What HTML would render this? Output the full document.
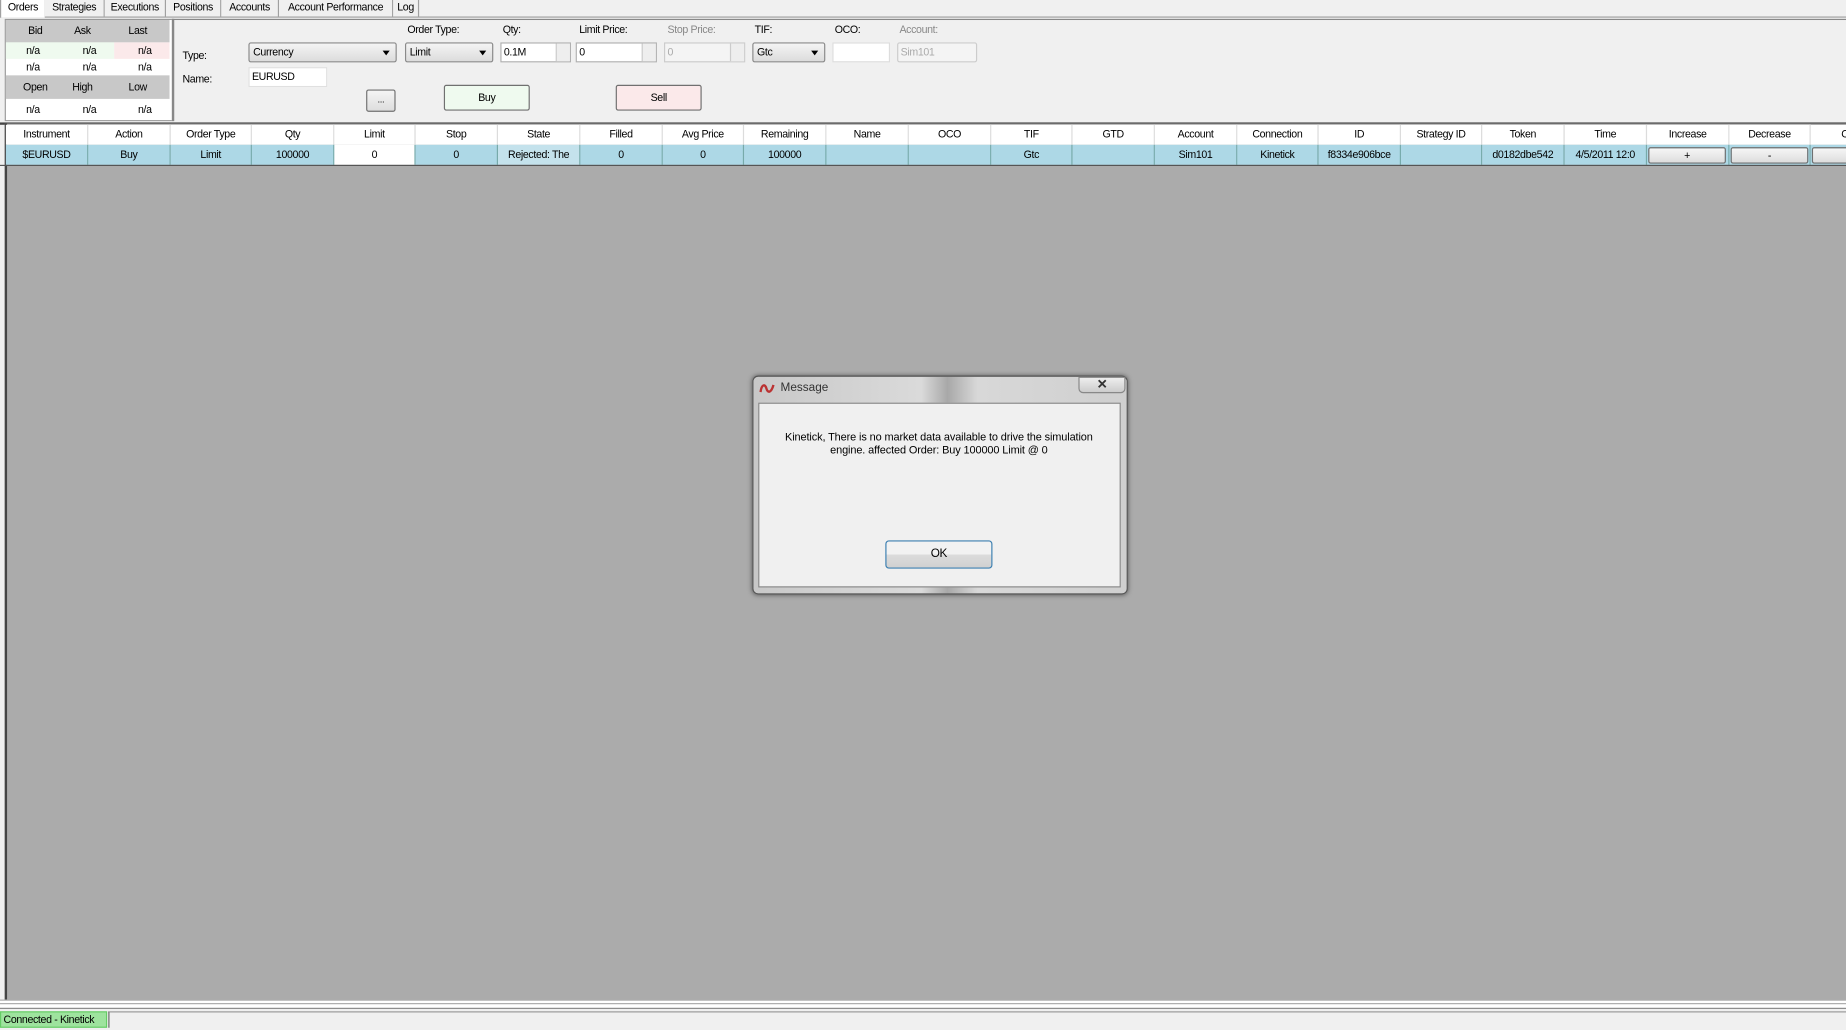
<!DOCTYPE html>
<html><head><meta charset="utf-8"><style>
html,body{margin:0;padding:0;width:1846px;height:1030px;overflow:hidden;background:#f0f0f0}
#root{position:absolute;left:0;top:0;width:1568px;height:875px;transform:scale(1.17730);transform-origin:0 0;font-family:"Liberation Sans",sans-serif;font-size:9px;letter-spacing:-0.3px;white-space:nowrap;color:#000;background:#f0f0f0}
.a{position:absolute;box-sizing:border-box}
.tab{position:absolute;top:0;height:14px;border-right:1px solid #a0a0a0;text-align:center;line-height:13px;background:#f0f0f0;overflow:hidden}
.c{position:absolute;text-align:center}
.cb{position:absolute;box-sizing:border-box;border:1px solid #8a8a8a;border-radius:2px;background:linear-gradient(#f4f4f4,#dcdcdc);height:17px;line-height:15px;padding-left:3px}
.cb:after{content:"";position:absolute;right:5px;top:6px;border-left:3px solid transparent;border-right:3px solid transparent;border-top:4px solid #000}
.tb{position:absolute;box-sizing:border-box;border:1px solid #b0b0b0;background:#fff;height:17px;line-height:15px;padding-left:2px}
.spin{position:absolute;right:0;top:0;width:11px;height:15px;border-left:1px solid #ccc;background:#eee}
.btn{position:absolute;box-sizing:border-box;border:1px solid #707070;border-radius:2px;text-align:center}
.hd{position:absolute;top:106px;height:17px;line-height:17px;text-align:center;border-right:1px solid #dcdcdc;background:#fff;overflow:hidden}
.cl{position:absolute;top:123px;height:17px;line-height:17px;text-align:center;border-right:1px solid #7aa;background:#add8e6;box-sizing:border-box;overflow:hidden}
</style></head><body><div id="root">
<div class="a" style="left:0;top:14px;width:1568px;height:1px;background:#a0a0a0"></div>
<div class="tab" style="left:0;width:37px;background:#fff;height:15px;border:1px solid #a0a0a0;border-bottom:none;top:-1px">Orders</div>
<div class="tab" style="left:38px;width:50px">Strategies</div>
<div class="tab" style="left:89px;width:51px">Executions</div>
<div class="tab" style="left:141px;width:46px">Positions</div>
<div class="tab" style="left:188px;width:48px">Accounts</div>
<div class="tab" style="left:237px;width:96px">Account Performance</div>
<div class="tab" style="left:334px;width:21px">Log</div>
<div class="a" style="left:4px;top:16px;width:143px;height:87px;border:1px solid #999;background:#fff"></div>
<div class="a" style="left:5px;top:17px;width:139px;height:19px;background:#c8c8c8"></div>
<div class="a" style="left:5px;top:36px;width:92px;height:14px;background:#effaef"></div>
<div class="a" style="left:97px;top:36px;width:47px;height:14px;background:#fbe9ea"></div>
<div class="a" style="left:5px;top:64px;width:139px;height:20px;background:#c8c8c8"></div>
<div class="c" style="left:10px;top:21px;width:40px">Bid</div><div class="c" style="left:50px;top:21px;width:40px">Ask</div><div class="c" style="left:97px;top:21px;width:40px">Last</div>
<div class="c" style="left:8px;top:38px;width:40px">n/a</div><div class="c" style="left:56px;top:38px;width:40px">n/a</div><div class="c" style="left:103px;top:38px;width:40px">n/a</div>
<div class="c" style="left:8px;top:52px;width:40px">n/a</div><div class="c" style="left:56px;top:52px;width:40px">n/a</div><div class="c" style="left:103px;top:52px;width:40px">n/a</div>
<div class="c" style="left:10px;top:69px;width:40px">Open</div><div class="c" style="left:50px;top:69px;width:40px">High</div><div class="c" style="left:97px;top:69px;width:40px">Low</div>
<div class="c" style="left:8px;top:88px;width:40px">n/a</div><div class="c" style="left:56px;top:88px;width:40px">n/a</div><div class="c" style="left:103px;top:88px;width:40px">n/a</div>
<div class="a" style="left:146px;top:16px;width:1422px;height:87px;border-left:2px solid #888;border-top:1px solid #888;background:#f0f0f0"></div>
<div class="a" style="left:155px;top:42px">Type:</div>
<div class="a" style="left:155px;top:62px">Name:</div>
<div class="a" style="left:346px;top:20px">Order Type:</div>
<div class="a" style="left:427px;top:20px">Qty:</div>
<div class="a" style="left:492px;top:20px">Limit Price:</div>
<div class="a" style="left:567px;top:20px;color:#888">Stop Price:</div>
<div class="a" style="left:641px;top:20px">TIF:</div>
<div class="a" style="left:709px;top:20px">OCO:</div>
<div class="a" style="left:764px;top:20px;color:#888">Account:</div>
<div class="cb" style="left:211px;top:36px;width:126px">Currency</div>
<div class="cb" style="left:344px;top:36px;width:75px">Limit</div>
<div class="tb" style="left:425px;top:36px;width:60px">0.1M<div class="spin"></div></div>
<div class="tb" style="left:489px;top:36px;width:69px">0<div class="spin"></div></div>
<div class="tb" style="left:564px;top:36px;width:69px;background:#f4f4f4;color:#aaa;border-color:#ccc">0<div class="spin"></div></div>
<div class="cb" style="left:639px;top:36px;width:62px">Gtc</div>
<div class="tb" style="left:707px;top:36px;width:49px;border-color:#ddd"></div>
<div class="tb" style="left:762px;top:36px;width:68px;background:#f4f4f4;color:#aaa;border-color:#ccc;border-radius:2px">Sim101</div>
<div class="tb" style="left:211px;top:57px;width:67px;border-color:#e0e0e0">EURUSD</div>
<div class="btn" style="left:311px;top:76px;width:25px;height:19px;background:linear-gradient(#f4f4f4,#ddd);line-height:16px;font-size:8px">...</div>
<div class="btn" style="left:377px;top:72px;width:73px;height:22px;background:#effaef;line-height:20px">Buy</div>
<div class="btn" style="left:523px;top:72px;width:73px;height:22px;background:#fbe9ea;line-height:20px">Sell</div>
<div class="a" style="left:0;top:103px;width:1568px;height:3px;background:#f0f0f0;border-bottom:2px solid #444"></div>
<div class="a" style="left:4px;top:105px;width:1564px;height:744px;background:#ababab;border-left:2px solid #444"></div>
<div class="hd" style="left:5px;width:69px">Instrument</div><div class="hd" style="left:75px;width:69px">Action</div><div class="hd" style="left:145px;width:68px">Order Type</div><div class="hd" style="left:214px;width:69px">Qty</div><div class="hd" style="left:284px;width:68px">Limit</div><div class="hd" style="left:353px;width:69px">Stop</div><div class="hd" style="left:423px;width:69px">State</div><div class="hd" style="left:493px;width:69px">Filled</div><div class="hd" style="left:563px;width:68px">Avg Price</div><div class="hd" style="left:632px;width:69px">Remaining</div><div class="hd" style="left:702px;width:69px">Name</div><div class="hd" style="left:772px;width:69px">OCO</div><div class="hd" style="left:842px;width:68px">TIF</div><div class="hd" style="left:911px;width:69px">GTD</div><div class="hd" style="left:981px;width:69px">Account</div><div class="hd" style="left:1051px;width:68px">Connection</div><div class="hd" style="left:1120px;width:69px">ID</div><div class="hd" style="left:1190px;width:68px">Strategy ID</div><div class="hd" style="left:1259px;width:69px">Token</div><div class="hd" style="left:1329px;width:69px">Time</div><div class="hd" style="left:1399px;width:69px">Increase</div><div class="hd" style="left:1469px;width:68px">Decrease</div><div class="hd" style="left:1538px;width:60px;text-align:left;padding-left:26px">C</div>
<div class="cl" style="left:5px;width:70px">$EURUSD</div><div class="cl" style="left:75px;width:70px">Buy</div><div class="cl" style="left:145px;width:69px">Limit</div><div class="cl" style="left:214px;width:70px">100000</div><div class="cl" style="left:284px;width:69px;background:#fff">0</div><div class="cl" style="left:353px;width:70px">0</div><div class="cl" style="left:423px;width:70px;background:#c4e2ec">Rejected: The</div><div class="cl" style="left:493px;width:70px">0</div><div class="cl" style="left:563px;width:69px">0</div><div class="cl" style="left:632px;width:70px">100000</div><div class="cl" style="left:702px;width:70px"></div><div class="cl" style="left:772px;width:70px"></div><div class="cl" style="left:842px;width:69px">Gtc</div><div class="cl" style="left:911px;width:70px"></div><div class="cl" style="left:981px;width:70px">Sim101</div><div class="cl" style="left:1051px;width:69px">Kinetick</div><div class="cl" style="left:1120px;width:70px">f8334e906bce</div><div class="cl" style="left:1190px;width:69px"></div><div class="cl" style="left:1259px;width:70px">d0182dbe542</div><div class="cl" style="left:1329px;width:70px">4/5/2011 12:0</div><div class="cl" style="left:1399px;width:70px"></div><div class="cl" style="left:1469px;width:69px"></div><div class="cl" style="left:1538px;width:40px"></div>
<div class="btn" style="left:1400px;top:125px;width:66px;height:14px;background:linear-gradient(#f6f6f6,#ddd);line-height:12px">+</div>
<div class="btn" style="left:1470px;top:125px;width:66px;height:14px;background:linear-gradient(#f6f6f6,#ddd);line-height:12px">-</div>
<div class="btn" style="left:1539px;top:125px;width:40px;height:14px;background:linear-gradient(#f6f6f6,#ddd)"></div>
<div class="a" style="left:0;top:140px;width:1568px;height:1px;background:#555"></div>
<div class="a" style="left:0;top:849px;width:1568px;height:8px;background:#fff;border-top:1px solid #aaa;border-bottom:1px solid #888"></div>
<div class="a" style="left:0;top:852px;width:1568px;height:1px;background:#aaa"></div>
<div class="a" style="left:0;top:859px;width:91px;height:14px;background:#9ee39e;border:1px solid #6c6;line-height:12px;padding-left:2px">Connected - Kinetick</div>
<div class="a" style="left:92px;top:859px;width:1476px;height:14px;border-left:1px solid #666;border-top:1px solid #999"></div>
<div class="a" style="left:639px;top:319px;width:319px;height:186px;border:1px solid #555;border-radius:5px;background:linear-gradient(90deg,#c8c8c8,#dadada 45%,#a8a8a8 52%,#d8d8d8 60%,#cfcfcf);box-shadow:0 0 4px rgba(0,0,0,.5)"></div>
<svg class="a" style="left:645px;top:324px" width="14" height="12" viewBox="0 0 14 12"><path d="M1 9 C2 2 5 2 6 6 C7 10 10 10 12 3" stroke="#b33" stroke-width="2" fill="none"/></svg>
<div class="a" style="left:663px;top:324px;font-size:10px;color:#333;letter-spacing:0">Message</div>
<div class="a" style="left:916px;top:320px;width:40px;height:14px;border:1px solid #888;border-radius:0 0 4px 4px;background:linear-gradient(#eee,#ccc);text-align:center;line-height:12px;font-weight:bold;font-size:11px;color:#333">✕</div>
<div class="a" style="left:644px;top:342px;width:308px;height:157px;background:#f0f0f0;border:1px solid #888"></div>
<div class="a" style="left:645px;top:366px;width:305px;text-align:center;font-size:9.3px;letter-spacing:-0.1px;line-height:11px">Kinetick, There is no market data available to drive the simulation<br>engine. affected Order: Buy 100000 Limit @ 0</div>
<div class="a" style="left:752px;top:459px;width:91px;height:24px;border:1px solid #3c7fb1;border-radius:3px;background:linear-gradient(#f2f2f2 50%,#dcdcdc 50%,#d0d0d0);text-align:center;line-height:22px;font-size:10px">OK</div>
</div></body></html>
